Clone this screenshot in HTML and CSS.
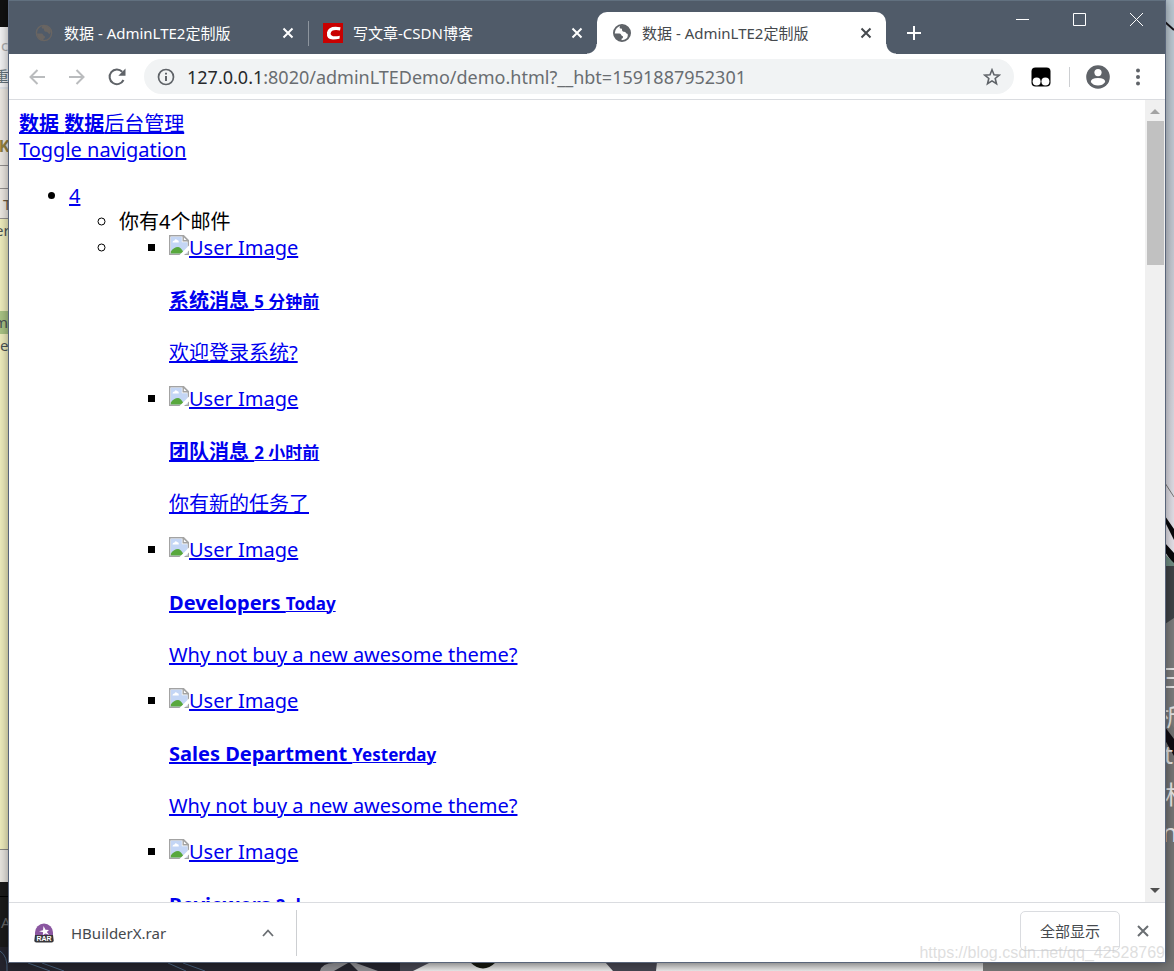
FILE: index.html
```html
<!DOCTYPE html>
<html lang="zh-CN">
<head>
<meta charset="utf-8">
<title>数据 - AdminLTE2定制版</title>
<link rel="stylesheet" href="styles.css">
</head>
<body>
<svg class="wallpaper" viewBox="0 0 1174 971" preserveAspectRatio="none" aria-hidden="true">
  <defs>
    <linearGradient id="sky" x1="0" y1="0" x2="0" y2="1"><stop offset="0" stop-color="#bac8d2"/><stop offset=".4" stop-color="#c3c8d1"/><stop offset="1" stop-color="#e6e3ea"/></linearGradient>
    <linearGradient id="paper" x1="0" y1="0" x2="0" y2="1"><stop offset="0" stop-color="#b5b5b5"/><stop offset="1" stop-color="#e8e8e8"/></linearGradient>
  </defs>
  <rect width="1174" height="971" fill="#747474"/>
  <rect width="9" height="27" fill="#111"/>
  <rect y="27" width="9" height="61" fill="#f2f2f3"/>
  <text x="1" y="51" class="edge-small" fill="#aaa">c</text>
  <text x="-6" y="82" class="edge-small" fill="#63717a">重</text>
  <rect y="87" width="9" height="2" fill="#dfe3e8"/>
  <rect y="89" width="9" height="129" fill="#ece8e2"/>
  <text x="-1" y="152" class="edge-bold" fill="#92803f">K</text>
  <path d="M0 165.500H9M0 188.500H9M0 218.500H9" stroke="#93908f"/>
  <text x="3" y="210" class="edge-small" fill="#6b5940">T</text>
  <rect y="219" width="9" height="630" fill="#efedbd"/>
  <rect y="311" width="9" height="23" fill="#a9c384"/>
  <g class="edge-small" fill="#4c5355"><text x="-5" y="236">er</text><text x="-6" y="328">m</text><text x="0" y="351">e</text></g>
  <rect y="849" width="9" height="1" fill="#8a8a85"/>
  <rect y="850" width="9" height="32" fill="#e8e5e0"/>
  <rect y="882" width="9" height="65" fill="#1b1b1b"/>
  <path d="M0 896.500H9" stroke="#000"/>
  <text x="1" y="928" class="edge-small" fill="#666">A</text>
  <rect y="947" width="430" height="24" fill="#24242d"/>
  <path d="M0 951q8 5 7 20M28 963l22 8M42 963l22 8M168 963l18 8M183 963l22 8" stroke="#48617c" fill="none"/>
  <path d="M320 971q2-8 14-8h14l-14 8zM350 963l8 8h20l-22-8z" fill="#8c8c90"/>
  <rect x="400" y="962" width="583" height="9" fill="url(#paper)"/>
  <path d="M400 962h31l-18 9h-13zM605 962h52l-1 9h-43z" fill="#44444f"/>
  <path d="M470 962h26q-13 13-26 0z" fill="#15170f"/>
  <rect x="1165" width="9" height="566" fill="url(#sky)"/>
  <path d="M1165 22l9 8" stroke="#171419" stroke-width="2"/>
  <path d="M1165 483l9 14" stroke="#777" fill="none"/>
  <path d="M1165 516l9 13v11l-9-18zM1165 543l9 10v12l-9-13z" fill="#09080b"/>
  <path d="M1165 554l9 9v4h-9z" fill="#6f8c82"/>
  <rect x="1165" y="566" width="9" height="58" fill="#3f4347"/>
  <path d="M1165 624l9-6v110l-9-12z" fill="#7c7c7c"/>
  <path d="M1165 727l9 12v17l-9-16z" fill="#100c12"/>
  <g class="edge-caption"><text x="1162" y="687">三</text><text x="1151" y="726">i析</text><text x="1164" y="764">t</text><text x="1165" y="804">析</text><text x="1162" y="842">n</text></g>
</svg>

<div class="window">
  <header class="titlebar">
    <div class="tab">
      <span class="tab-icon"><svg width="18" height="18" viewBox="0 0 20 20"><circle cx="10" cy="10" r="8.500" fill="none" stroke="#696562" stroke-width="1.500"/><path d="M2 10.500H7q1.500 0 2 1.500t2 1.500v2l-1.500 1v1.500Q3 17.500 2 10.500zM8.500 2q-1.800 1.500-.8 2.700 1.200.9 2.300.3v2q.5 2 2.500 1.500 2 0 2 1.800 1.500 0 1.500 1.500 2.500-3 1-6Q14.500 1.500 8.500 2z" fill="#696562"/></svg></span>
      <span class="tab-title">数据 - AdminLTE2定制版</span>
      <button class="tab-close" aria-label="关闭标签页"><svg width="12" height="12" viewBox="0 0 12 12"><path d="M1.500 1.500l9 9m0-9l-9 9"/></svg></button>
    </div>
    <div class="tab tab-divided">
      <span class="tab-icon"><svg width="20" height="20" viewBox="0 0 20 20"><rect width="20" height="20" fill="#c90000"/><path d="M17.500 4.200Q5.500 2 4 9.500 3.200 16.500 10 16.500q3 0 6.500-.8l.3-2.900q-9.300 1.700-9.200-2.300.5-4.600 9.400-3.100z" fill="#fff"/></svg></span>
      <span class="tab-title">写文章-CSDN博客</span>
      <button class="tab-close" aria-label="关闭标签页"><svg width="12" height="12" viewBox="0 0 12 12"><path d="M1.500 1.500l9 9m0-9l-9 9"/></svg></button>
    </div>
    <div class="tab tab-active">
      <span class="tab-icon"><svg width="18" height="18" viewBox="0 0 20 20"><circle cx="10" cy="10" r="9" fill="#fff" stroke="#5f6368" stroke-width="2"/><path d="M1.500 10.500H7q1.500 0 2 1.500t2 1.500v2l-1.500 1v2.200Q2.500 18.500 1.500 10.500zM8.500 1.500q-1.800 2-.8 3.200 1.200.9 2.300.3v2q.5 2 2.500 1.500 2 0 2 1.800 2 0 2 1.700 0 2-1 3.500 5-3 3-9Q15.500.5 8.500 1.500z" fill="#5f6368"/></svg></span>
      <span class="tab-title">数据 - AdminLTE2定制版</span>
      <button class="tab-close" aria-label="关闭标签页"><svg width="12" height="12" viewBox="0 0 12 12"><path d="M1.500 1.500l9 9m0-9l-9 9"/></svg></button>
    </div>
    <button class="new-tab" aria-label="新标签页"><svg width="16" height="16" viewBox="0 0 16 16"><path d="M8 1v14M1 8h14"/></svg></button>
    <div class="window-controls">
      <button aria-label="最小化"><svg width="13" height="13" viewBox="0 0 13 13"><path d="M0 6.500h13"/></svg></button>
      <button aria-label="最大化"><svg width="13" height="13" viewBox="0 0 13 13"><path d="M.5.5h12v12H.5z"/></svg></button>
      <button aria-label="关闭"><svg width="13" height="13" viewBox="0 0 13 13"><path d="M0 0l13 13M13 0L0 13"/></svg></button>
    </div>
  </header>

  <nav class="toolbar" aria-label="工具栏">
    <button class="tool" aria-label="后退"><svg width="16" height="16" viewBox="0 0 16 16" fill="none" stroke="#babcbe" stroke-width="2"><path d="M16 8H1.500M8.500 1L1.500 8l7 7"/></svg></button>
    <button class="tool" aria-label="前进"><svg width="16" height="16" viewBox="0 0 16 16" fill="none" stroke="#babcbe" stroke-width="2"><path d="M0 8h14.500M7.500 1l7 7-7 7"/></svg></button>
    <button class="tool" aria-label="重新加载"><svg width="18" height="18" viewBox="0 0 18 18"><path d="M15.500 12A7.300 7.300 0 1 1 14.200 3.800" fill="none" stroke="#5f6368" stroke-width="2"/><path d="M17.500.5v7.200h-7.200z" fill="#5f6368"/></svg></button>
    <div class="omnibox">
      <svg width="18" height="18" viewBox="0 0 18 18"><circle cx="9" cy="9" r="7.500" fill="none" stroke="#5f6368" stroke-width="1.700"/><path d="M9 8v5M9 4.700v1.800" stroke="#5f6368" stroke-width="2"/></svg>
      <a class="url" href="#"><span class="url-host">127.0.0.1</span>:8020/adminLTEDemo/demo.html?__hbt=1591887952301</a>
      <button class="star" aria-label="添加书签"><svg width="18" height="18" viewBox="0 0 18 18"><path d="M9 1.800l2 4.900 5.300.4-4.100 3.400 1.300 5.200L9 12.900l-4.500 2.800 1.300-5.200L1.700 7.100l5.300-.4z" fill="none" stroke="#5f6368" stroke-width="1.600"/></svg></button>
    </div>
    <button class="tool" aria-label="扩展程序"><svg width="20" height="20" viewBox="0 0 20 20"><rect x=".5" y=".5" width="19" height="19" rx="4" fill="#000"/><circle cx="5.600" cy="14.400" r="4" fill="#fff"/><circle cx="14.400" cy="14.400" r="4" fill="#fff"/></svg></button>
    <span class="tool-divider"></span>
    <button class="tool" aria-label="用户"><svg width="24" height="24" viewBox="0 0 24 24"><circle cx="12" cy="12" r="11.800" fill="#5f6368"/><circle cx="12" cy="7.600" r="3.600" fill="#fff"/><path d="M4.800 17q0-4 7.200-4t7.200 4q-2.500 3.600-7.200 3.600T4.800 17z" fill="#fff"/></svg></button>
    <button class="tool" aria-label="菜单"><svg width="4" height="18" viewBox="0 0 4 18" fill="#5f6368"><circle cx="2" cy="2.500" r="2"/><circle cx="2" cy="9" r="2"/><circle cx="2" cy="15.500" r="2"/></svg></button>
  </nav>

  <div class="viewport">
    <main class="page">
      <a href="#"><b>数据</b> <b>数据</b>后台管理</a><br>
      <a href="#">Toggle navigation</a>
      <ul class="menu">
        <li><a href="#">4</a>
          <ul>
            <li>你有4个邮件</li>
            <li>
              <ul>
                <li><a href="#"><span class="photo"><svg class="broken" viewBox="0 0 20 20"><use href="#broken"/></svg>User Image</span></a>
                  <h4><a href="#">系统消息 </a><small><a href="#">5 分钟前</a></small></h4><p><a href="#">欢迎登录系统?</a></p></li>
                <li><a href="#"><span class="photo"><svg class="broken" viewBox="0 0 20 20"><use href="#broken"/></svg>User Image</span></a>
                  <h4><a href="#">团队消息 </a><small><a href="#">2 小时前</a></small></h4><p><a href="#">你有新的任务了</a></p></li>
                <li><a href="#"><span class="photo"><svg class="broken" viewBox="0 0 20 20"><use href="#broken"/></svg>User Image</span></a>
                  <h4><a href="#">Developers </a><small><a href="#">Today</a></small></h4><p><a href="#">Why not buy a new awesome theme?</a></p></li>
                <li><a href="#"><span class="photo"><svg class="broken" viewBox="0 0 20 20"><use href="#broken"/></svg>User Image</span></a>
                  <h4><a href="#">Sales Department </a><small><a href="#">Yesterday</a></small></h4><p><a href="#">Why not buy a new awesome theme?</a></p></li>
                <li><a href="#"><span class="photo"><svg class="broken" viewBox="0 0 20 20"><use href="#broken"/></svg>User Image</span></a>
                  <h4><a href="#">Reviewers </a><small><a href="#">2 days</a></small></h4></li>
              </ul>
            </li>
          </ul>
        </li>
      </ul>
    </main>
    <div class="scrollbar" aria-hidden="true">
      <svg width="10" height="5" viewBox="0 0 10 5"><path d="M0 5l5-5 5 5z" fill="#a3a3a3"/></svg>
      <span class="track"><span class="thumb"></span></span>
      <svg width="10" height="5" viewBox="0 0 10 5"><path d="M0 0l5 5 5-5z" fill="#505050"/></svg>
    </div>
  </div>

  <footer class="downloads">
    <button class="download">
      <svg width="20" height="20" viewBox="0 0 20 20"><path d="M1 12V9.500a9 9 0 0 1 18 0V12z" fill="#8a56a0"/><path d="M9.500 3l2 3.700 3.500.3-2.200 2 2.400 2.800-4-1.200-2.400 1.600.3-3L5 8.200l4-1z" fill="#fff"/><path d="M1 12h18l.7 5.500q0 2-2 2H2.300q-2 0-2-2z" fill="#37363a"/><text class="rar" x="10" y="18" text-anchor="middle">RAR</text></svg>
      <span class="file-name">HBuilderX.rar</span>
      <svg width="12" height="8" viewBox="0 0 12 8"><path d="M1 7l5-5.500L11 7" fill="none" stroke="#6a6e72" stroke-width="1.800"/></svg>
    </button>
    <button class="show-all">全部显示</button>
    <button class="shelf-close" aria-label="关闭下载栏"><svg width="12" height="12" viewBox="0 0 12 12"><path d="M1 1l10 10M11 1L1 11" stroke="#6a6e72" stroke-width="2"/></svg></button>
  </footer>
</div>
<span class="watermark">https://blog.csdn.net/qq_42528769</span>

<svg class="symbols" aria-hidden="true">
  <symbol id="broken" viewBox="0 0 20 20">
    <path d="M.7.700h13.800l4.800 4.800v13.800H.7z" fill="#fff" stroke="#a3a3a3" stroke-width="1.400"/>
    <path d="M1.800 1.800h11v5.400h5.700v11.300H1.800z" fill="#c4d6f5"/>
    <path d="M3.500 7.500q0-2 2-2 1-2.300 2.600-.5 2.200.3 1.700 2.500z" fill="#fff"/>
    <path d="M1.800 18.500v-2q3-4.500 7.200-4.500 3-.3 6 6.500z" fill="#58a83d"/>
    <path d="M14.200.7l5.100 5.100h-5.100z" fill="#fff" stroke="#a3a3a3" stroke-width="1.400"/>
    <path d="M20 10.500L10.500 20H15l5-4.500z" fill="#fff"/>
  </symbol>
</svg>
</body>
</html>
```

FILE: styles.css
```css
* { box-sizing: border-box; }

body {
  margin: 0;
  height: 100vh;
  padding: 0 8px 8px;
  overflow: hidden;
  position: relative;
  font-family: "Noto Sans", "Noto Sans CJK SC", sans-serif;
}

button {
  display: flex;
  align-items: center;
  justify-content: center;
  flex: none;
  margin: 0;
  padding: 0;
  border: 0;
  background: none;
  color: inherit;
  font: inherit;
}

svg { display: block; flex: none; }

.symbols { position: absolute; width: 0; height: 0; }
.wallpaper { position: absolute; top: 0; left: 0; width: 100%; height: 100%; }
.edge-small { font-size: 15px; }
.edge-bold { font: bold 18px "Liberation Mono", monospace; }
.edge-caption { font-size: 25px; fill: #e5e5e5; }

.window {
  position: relative;
  display: flex;
  flex-direction: column;
  height: 100%;
  background: #fff;
  border: 1px solid #59657a;
  border-top: 0;
  box-shadow: 0 0 10px rgba(0, 0, 0, .4);
}

/* Title bar */
.titlebar {
  display: flex;
  flex: none;
  height: 54px;
  padding-left: 10px;
  background: #505b69;
  border-top: 1px solid #61707f;
  color: #fff;
}

.tab {
  position: relative;
  display: flex;
  align-items: center;
  gap: 10px;
  flex: 0 1 289px;
  min-width: 0;
  margin-top: 11px;
  padding: 0 14px 0 15px;
  font-size: 15px;
  line-height: 20px;
}
.tab-divided::before {
  content: "";
  position: absolute;
  left: 0;
  top: 9px;
  width: 1px;
  height: 25px;
  background: #8d959e;
}
.tab-icon { display: flex; justify-content: center; width: 20px; flex: none; }
.tab-title { flex: 1; white-space: nowrap; overflow: hidden; }
.tab-close svg { fill: none; stroke: currentColor; stroke-width: 2; }
.tab-active { background: #fff; color: #45494d; border-radius: 10px 10px 0 0; }
.tab-active::before,
.tab-active::after {
  content: "";
  position: absolute;
  bottom: 0;
  width: 10px;
  height: 10px;
}
.tab-active::before { right: 100%; background: radial-gradient(circle at 0 0, #505b69 9px, #fff 10px); }
.tab-active::after { left: 100%; background: radial-gradient(circle at 100% 0, #505b69 9px, #fff 10px); }

.new-tab { width: 56px; margin-top: 11px; }
.new-tab svg { stroke: #fff; stroke-width: 2; }

.window-controls { display: flex; height: 37px; margin-left: auto; }
.window-controls button { width: 57px; }
.window-controls svg { fill: none; stroke: #fff; stroke-width: 1; }

/* Toolbar */
.toolbar {
  display: flex;
  align-items: center;
  flex: none;
  height: 46px;
  padding: 0 7px 0 8px;
  border-bottom: 1px solid #dadce0;
}
.tool { width: 40px; height: 40px; }
.omnibox {
  display: flex;
  align-items: center;
  gap: 12px;
  flex: 1;
  min-width: 0;
  height: 35px;
  margin: 0 7px;
  padding: 0 13px;
  background: #f1f3f4;
  border-radius: 18px;
}
.url {
  flex: 1;
  overflow: hidden;
  white-space: nowrap;
  color: #696d71;
  font-size: 18px;
  line-height: 26px;
  text-decoration: none;
}
.url-host { color: #27292c; }
.tool-divider { width: 1px; height: 20px; margin: 0 8px; background: #cdcfd2; }

/* Web page */
.viewport { display: flex; flex: 1; min-height: 0; }
.page {
  flex: 1;
  min-width: 0;
  overflow: hidden;
  padding: 11px 10px;
  color: #000;
  font-size: 20px;
  line-height: 26px;
}
.page a { color: #00e; text-decoration-thickness: 2px; }
.page ul { margin: 0; padding-left: 50px; list-style: square; }
.page .menu { margin-top: 20px; list-style: disc; }
.page .menu > li > ul { list-style: circle; }
.page h4 { margin: 27px 0 26px; font-size: 20px; line-height: 26px; }
.page h4 a { white-space: pre; }
.page small { font-size: 17px; line-height: 20px; }
.page small a { text-decoration-thickness: 1px; }
.page p { margin: 0 0 20px; }
.photo { white-space: nowrap; }
.broken { display: inline-block; width: 20px; height: 20px; vertical-align: baseline; }

.scrollbar {
  display: flex;
  flex-direction: column;
  align-items: center;
  flex: none;
  width: 20px;
  padding: 9px 0;
  background: #f0f0f0;
}
.track { flex: 1; width: 17px; padding: 7px 0; }
.thumb { display: block; height: 19%; background: #c1c1c1; }

/* Download shelf */
.downloads {
  display: flex;
  align-items: flex-start;
  flex: none;
  height: 60px;
  padding: 7px 16px 0 0;
  border-top: 1px solid #dadce0;
  color: #45494d;
  font-size: 15px;
  line-height: 20px;
}
.download {
  justify-content: flex-start;
  gap: 17px;
  width: 288px;
  height: 46px;
  padding: 0 22px 0 25px;
  border-right: 1px solid #cdcfd2;
}
.file-name { flex: 1; text-align: left; }
.rar { font: bold 7px "Liberation Sans", sans-serif; fill: #fff; }
.show-all {
  width: 100px;
  height: 40px;
  margin: 1px 17px 0 auto;
  border: 1px solid #dadce0;
  border-radius: 5px;
}
.shelf-close { height: 40px; margin-top: 1px; }

.watermark {
  position: absolute;
  right: 9px;
  bottom: 8px;
  color: rgba(200, 200, 200, .6);
  font: 16px/20px "Liberation Sans", sans-serif;
}
```
